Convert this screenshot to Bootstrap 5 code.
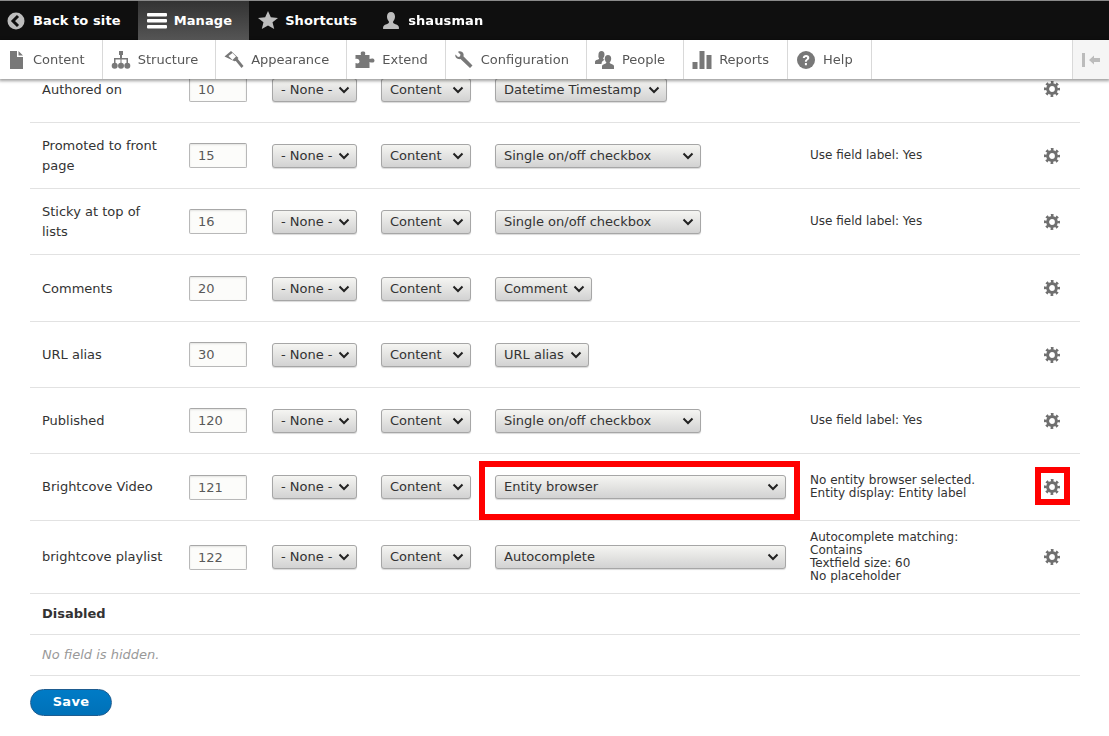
<!DOCTYPE html>
<html lang="en">
<head>
  <meta charset="UTF-8" />
  <meta name="viewport" content="width=device-width, initial-scale=1" />
  <title>Manage form display</title>
  <link href="https://cdn.jsdelivr.net/npm/bootstrap@5.3.3/dist/css/bootstrap.min.css" rel="stylesheet" />
  <style>
    body {
      font-family: "DejaVu Sans", sans-serif;
      font-size: 13px;
      line-height: 20px;
      color: #333;
      background: #fff;
      overflow: hidden;
    }
    .admin-bar {
      height: 40px;
      background: #0f0f0f;
      border-top: 1px solid #8a8a8a;
    }
    .bar-item {
      display: flex;
      align-items: center;
      gap: 7px;
      height: 39px;
      padding: 0 17px 0 9px;
      color: #fff;
      font-weight: 700;
      font-size: 13px;
      letter-spacing: .1px;
      text-decoration: none;
    }
    .bar-item.is-active {
      background: linear-gradient(#333, #555);
    }
    .bar-back {
      gap: 8px;
      padding: 0 17px 0 7px;
    }
    .bar-shortcuts {
      padding-right: 15px;
    }
    .tray {
      height: 39px;
      background: #fff;
      box-shadow: 0 1px 3px 1px rgba(0, 0, 0, .38);
    }
    .tray-item {
      display: flex;
      align-items: center;
      gap: 7px;
      height: 39px;
      padding: 0 17px 0 8px;
      color: #565656;
      text-decoration: none;
      border-right: 1px solid #d9d9d9;
    }
    .tray-item.tray-roomy {
      padding-right: 18px;
    }
    .tray-toggle {
      width: 37px;
      background: #f5f5f5;
      border-left: 1px solid #d9d9d9;
    }
    .page-wrap {
      padding: 56px 29px 0 30px;
    }
    .field-table {
      table-layout: fixed;
      width: 1050px;
      margin: 0;
      --bs-table-color: #333;
      --bs-table-border-color: #e2e2e2;
    }
    .field-table td {
      padding: 1px 12px 0;
      vertical-align: middle;
      border-bottom: 1px solid #e2e2e2;
    }
    .row-std { height: 66px; }
    .row-wider { height: 67px; }
    .row-tall { height: 73px; }
    .row-short { height: 41px; }
    .field-table .row-low td { padding-top: 2px; }
    .weight-input {
      display: block;
      width: 58px;
      height: 25px;
      padding: 0 8px;
      font-size: 13px;
      color: #595959;
      background: #fcfcfa;
      border: 1px solid #b8b8b8;
      border-top-color: #a8a8a8;
      border-radius: 2px;
      box-shadow: inset 0 1px 2px rgba(0, 0, 0, .1);
    }
    .plain-select {
      display: block;
      height: 24px;
      padding: 0 8px;
      font-size: 13px;
      line-height: 22px;
      color: #333;
      border: 1px solid #a6a6a6;
      border-radius: 3px;
      appearance: none;
      background-color: #e4e4e4;
      background-image: url("data:image/svg+xml,%3Csvg xmlns='http://www.w3.org/2000/svg' width='12' height='8' viewBox='0 0 12 8'%3E%3Cpath d='M1.5 1.5 6 6l4.500-4.500' fill='none' stroke='%23222' stroke-width='2'/%3E%3C/svg%3E"), linear-gradient(#f5f5f2, #d2d2d2);
      background-repeat: no-repeat;
      background-position: right 6px center, 0 0;
      box-shadow: 0 1px 1px rgba(0, 0, 0, .15);
    }
    .sel-none { width: 85px; }
    .sel-region { width: 90px; }
    .sel-date { width: 172px; }
    .sel-check { width: 206px; }
    .sel-comment { width: 97px; }
    .sel-alias { width: 94px; }
    .sel-wide { width: 291px; }
    .summary-text {
      font-size: 12px;
      line-height: 13px;
    }
    .field-table td.gear-cell {
      padding: 1px 8px 0 0;
    }
    .mark-box {
      position: absolute;
      border: 6px solid #f00;
      pointer-events: none;
    }
    .mark-plugin {
      left: -4px;
      top: 7px;
      width: 321px;
      height: 59px;
    }
    .mark-gear {
      left: 3px;
      top: 13px;
      width: 35px;
      height: 38px;
    }
    .hidden-note {
      color: #999;
      font-style: italic;
    }
    .save-btn {
      margin-top: 13px;
      width: 82px;
      height: 27px;
      padding: 0;
      font-size: 13px;
      font-weight: 700;
      letter-spacing: .3px;
      color: #fff;
      background: linear-gradient(#007bc6, #0071b8);
      border: 1px solid #1e5c90;
      border-radius: 14px;
    }
  </style>
</head>
<body>
  <svg width="0" height="0" class="d-block">
    <defs>
      <symbol id="gear" viewBox="0 0 16 16">
        <circle cx="8" cy="8" r="4.400" fill="none" stroke="#6f6f6f" stroke-width="3"/>
        <circle cx="8" cy="8" r="6.600" fill="none" stroke="#6f6f6f" stroke-width="2.800" stroke-dasharray="2.600 2.584" stroke-dashoffset="1.300"/>
      </symbol>
    </defs>
  </svg>

  <header class="fixed-top">
    <nav class="admin-bar d-flex">
      <a href="#" class="bar-item bar-back">
        <svg width="18" height="18" viewBox="0 0 18 18"><circle cx="9" cy="9" r="8.500" fill="#bdbdbd"/><path d="M11 4 6 9l5 5" fill="none" stroke="#0f0f0f" stroke-width="3"/></svg>
        Back to site
      </a>
      <a href="#" class="bar-item is-active">
        <svg width="20" height="19" viewBox="0 0 20 19"><rect y="2" width="20" height="3.500" rx="1" fill="#fff"/><rect y="8" width="20" height="3.500" rx="1" fill="#fff"/><rect y="14" width="20" height="3.500" rx="1" fill="#fff"/></svg>
        Manage
      </a>
      <a href="#" class="bar-item bar-shortcuts">
        <svg width="20" height="19" viewBox="0 0 19 19" preserveAspectRatio="none"><path d="M9.500 0l2.700 6.300 6.800.6-5.200 4.400 1.600 6.700-5.900-3.600-5.900 3.600 1.600-6.700L0 6.900l6.800-.6z" fill="#bdbdbd"/></svg>
        Shortcuts
      </a>
      <a href="#" class="bar-item">
        <svg width="20" height="20" viewBox="0 0 19 20"><path d="M9.500 1c2.500 0 4 2 4 4.600 0 2-.8 3.700-1.700 4.700-.5.600-.3 1.700.6 2.200 2 .9 4.600 1.400 5 3.500v2H1.600v-2c.4-2.100 3-2.600 5-3.500.9-.5 1.100-1.600.6-2.200-.9-1-1.700-2.700-1.700-4.700C5.500 3 7 1 9.500 1z" fill="#bdbdbd"/></svg>
        shausman
      </a>
    </nav>
    <nav class="tray d-flex">
      <a href="#" class="tray-item">
        <svg width="18" height="18" viewBox="-2 0 18 18"><path d="M0 0h7v6h6v12H0zM8.500 0 13 4.500H8.500z" fill="#787878"/></svg>
        Content
      </a>
      <a href="#" class="tray-item">
        <svg width="20" height="18" viewBox="0 0 19 18"><path d="M7.500 0h4v4h-1v3h6v5h-1.500V8.500H10V12H9V8.500H4V12H2.500V7h6V4h-1z" fill="#787878"/><circle cx="3.200" cy="14.800" r="3" fill="#787878"/><circle cx="9.500" cy="14.800" r="3" fill="#787878"/><circle cx="15.800" cy="14.800" r="3" fill="#787878"/></svg>
        Structure
      </a>
      <a href="#" class="tray-item">
        <svg width="20" height="18" viewBox="0 0 19 18"><path d="M6.500 0 14 7l-3 3-1 .2L0 5.500 6.500 0zM10.500 9l2-2L19 15l-2 2z" fill="#787878"/><path d="M4 5 8 2l3.500 3.500L8 9z" fill="#fff"/></svg>
        Appearance
      </a>
      <a href="#" class="tray-item">
        <svg width="20" height="18" viewBox="0 0 19 18"><path d="M0 4h5.500C5 2 5 .5 7.500.5S10 2 9.500 4H14v4c2-1 5-1 5 1.500s-3 2.500-5 1.500v6H0v-5c2 1 4 .5 4-1.500S2 7 0 8z" fill="#787878"/></svg>
        Extend
      </a>
      <a href="#" class="tray-item">
        <svg width="20" height="18" viewBox="0 0 19 18"><path d="M1 3.500 4 .5c2-.8 4.500.4 5 2.500.2.800.1 1.700-.1 2.300L18 14.500 15.500 17 6 8c-.7.200-1.500.2-2.200 0C1.500 7.400.3 5.500 1 3.500L3.500 6 5.500 5.500 6 3.500 3.500 1z" fill="#787878"/></svg>
        Configuration
      </a>
      <a href="#" class="tray-item tray-roomy">
        <svg width="20" height="18" viewBox="0 0 20 18"><path d="M6.500 0c2 0 3 1.500 3 3.400 0 1.400-.5 2.700-1.200 3.500-.3.400-.2 1 .3 1.300l1 .5C8 9.500 6.500 10.500 6.500 13H0v-2.500c.3-1.400 2-1.700 3.500-2.300.6-.3.7-1 .4-1.300C3.100 6.100 3.500 4.800 3.500 3.400 3.500 1.500 4.500 0 6.500 0z" fill="#787878"/><path d="M13 4c2 0 3.200 1.500 3.200 3.500 0 1.500-.5 2.800-1.300 3.600-.4.400-.2 1.100.4 1.400 1.400.6 3.400 1 3.700 2.500V18H7v-3c.3-1.500 2.300-1.900 3.700-2.500.6-.3.800-1 .4-1.400-.8-.8-1.300-2.100-1.300-3.600C9.800 5.500 11 4 13 4z" fill="#787878"/></svg>
        People
      </a>
      <a href="#" class="tray-item tray-roomy">
        <svg width="20" height="18" viewBox="0 0 19 18"><path d="M0 11h5v7H0zM7 0h5v18H7zM14 4h5v14h-5z" fill="#787878"/></svg>
        Reports
      </a>
      <a href="#" class="tray-item tray-roomy">
        <svg width="20" height="18" viewBox="0 0 18 18"><circle cx="9" cy="9" r="9" fill="#787878"/><path d="M5.800 7c0-2 1.500-3 3.300-3s3.200 1 3.200 2.800c0 2.400-2.500 2.300-2.500 4H7.900c0-2.700 2.200-2.600 2.200-3.900 0-.6-.5-1-1.100-1-.7 0-1.100.4-1.200 1.100zM7.900 12h2v2.200h-2z" fill="#fff"/></svg>
        Help
      </a>
      <div class="flex-grow-1"></div>
      <div class="tray-toggle d-flex align-items-center justify-content-center">
        <svg width="19" height="14" viewBox="0 0 19 14"><path d="M0 0h3v14H0zM7 7l5-4.500V5h6v4h-6v2.500z" fill="#bcbcbc"/></svg>
      </div>
    </nav>
  </header>

  <main class="page-wrap">
    <table class="table field-table">
      <colgroup>
        <col style="width:147px" />
        <col style="width:83px" />
        <col style="width:109px" />
        <col style="width:114px" />
        <col style="width:315px" />
        <col style="width:234px" />
        <col style="width:48px" />
      </colgroup>
      <tbody id="fieldRows"></tbody>
    </table>
    <button class="btn save-btn">Save</button>
  </main>

<script>
  const fields = [
    { label: "Authored on", weight: 10, plugin: "Datetime Timestamp", size: "sel-date", row: "row-std row-low", summary: [] },
    { label: "Promoted to front page", weight: 15, plugin: "Single on/off checkbox", size: "sel-check", summary: ["Use field label: Yes"] },
    { label: "Sticky at top of lists", weight: 16, plugin: "Single on/off checkbox", size: "sel-check", summary: ["Use field label: Yes"] },
    { label: "Comments", weight: 20, plugin: "Comment", size: "sel-comment", row: "row-wider row-low", summary: [] },
    { label: "URL alias", weight: 30, plugin: "URL alias", size: "sel-alias", summary: [] },
    { label: "Published", weight: 120, plugin: "Single on/off checkbox", size: "sel-check", summary: ["Use field label: Yes"] },
    { label: "Brightcove Video", weight: 121, plugin: "Entity browser", size: "sel-wide", marked: true, row: "row-wider", summary: ["No entity browser selected.", "Entity display: Entity label"] },
    { label: "brightcove playlist", weight: 122, plugin: "Autocomplete", size: "sel-wide", row: "row-tall", summary: ["Autocomplete matching:", "Contains", "Textfield size: 60", "No placeholder"] }
  ];

  const rows = fields.map((f) => `
    <tr class="${f.row || "row-std"}">
      <td>${f.label}</td>
      <td><input class="weight-input" type="text" value="${f.weight}" /></td>
      <td><select class="plain-select sel-none"><option>- None -</option></select></td>
      <td><select class="plain-select sel-region"><option>Content</option></select></td>
      <td class="position-relative">
        <select class="plain-select ${f.size}"><option>${f.plugin}</option></select>
        ${f.marked ? '<div class="mark-box mark-plugin"></div>' : ""}
      </td>
      <td class="summary-text">${f.summary.join("<br>")}</td>
      <td class="gear-cell position-relative">
        <svg width="16" height="16" class="d-block mx-auto"><use href="#gear" /></svg>
        ${f.marked ? '<div class="mark-box mark-gear"></div>' : ""}
      </td>
    </tr>`);

  rows.push(`<tr class="row-short"><td colspan="7" class="fw-bold">Disabled</td></tr>`);
  rows.push(`<tr class="row-short"><td colspan="7" class="hidden-note">No field is hidden.</td></tr>`);
  document.getElementById("fieldRows").innerHTML = rows.join("");
</script>
<script src="https://cdn.jsdelivr.net/npm/bootstrap@5.3.3/dist/js/bootstrap.bundle.min.js"></script>
</body>
</html>
